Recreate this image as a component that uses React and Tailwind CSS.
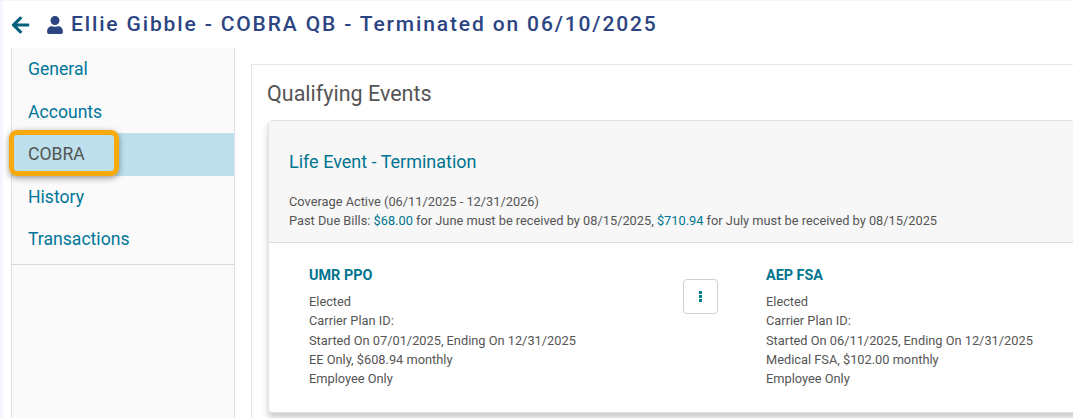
import React from "react";
import { FaArrowLeft, FaUser } from "react-icons/fa";

const NAV = ["General", "Accounts", "COBRA", "History", "Transactions"];

const PLANS = [
  {
    name: "UMR PPO",
    lines: [
      "Elected",
      "Carrier Plan ID:",
      "Started On 07/01/2025, Ending On 12/31/2025",
      "EE Only, $608.94 monthly",
      "Employee Only",
    ],
  },
  {
    name: "AEP FSA",
    lines: [
      "Elected",
      "Carrier Plan ID:",
      "Started On 06/11/2025, Ending On 12/31/2025",
      "Medical FSA, $102.00 monthly",
      "Employee Only",
    ],
  },
];

function Plan({ plan }) {
  return (
    <div className="w-[374px] shrink-0">
      <div className="text-[14.4px] leading-[20px] font-bold text-[#00758f]">{plan.name}</div>
      <div className="mt-[6px] text-[12.8px] leading-[19.3px] text-[#555]">
        {plan.lines.map((line) => (
          <div key={line}>{line}</div>
        ))}
      </div>
    </div>
  );
}

export default function App() {
  return (
    <div className="relative flex h-[418px] w-[1073px] flex-col overflow-hidden border-t border-l-[3px] border-[#f4f6fc] bg-white font-['Roboto',sans-serif]">
      {/* Page title */}
      <div className="flex h-[47px] shrink-0 items-center pt-[1px] pl-[8px]">
        <FaArrowLeft className="h-[20px] w-[19px] text-[#00607a]" />
        <FaUser className="ml-[17px] h-[18px] w-[16px] text-[#2c4582]" />
        <h1 className="ml-[8px] text-[21px] font-medium tracking-[1.86px] whitespace-nowrap text-[#2c4582]">
          Ellie Gibble - COBRA QB - Terminated on 06/10/2025
        </h1>
      </div>

      <div className="flex min-h-0 flex-1">
        {/* Sidebar */}
        <div className="ml-[8px] w-[224px] shrink-0 border-x border-[#e0e0e0] bg-[#fafafa]">
          <div className="border-b border-[#d8d8d8] pb-[3.2px]">
            {NAV.map((item) => (
              <div
                key={item}
                className={
                  item === "COBRA"
                    ? "flex h-[42.8px] items-center bg-[#bde0ec] pl-[16px] text-[17.6px] text-[#555]"
                    : "flex h-[42.5px] items-center pl-[16px] text-[17.6px] text-[#00769a]"
                }
              >
                {item}
              </div>
            ))}
          </div>
        </div>

        {/* Main panel */}
        <div className="mt-[16px] ml-[16px] min-w-0 flex-1 border-t border-l border-[#e6e6e6] pl-[16px]">
          <h2 className="-ml-[1px] pt-[15px] text-[21.5px] leading-[28px] text-[#555]">Qualifying Events</h2>

          <div className="mt-[12px] w-[900px] rounded-[4px] border border-[#e2e2e2] bg-white shadow-[0_5px_6px_rgba(0,0,0,0.2)]">
            <div className="h-[122px] border-b border-[#dcdcdc] bg-[#f7f7f7] pt-[29px] pl-[20px]">
              <div className="text-[18px] leading-[24px] text-[#00758f]">Life Event - Termination</div>
              <div className="mt-[18px] text-[12.8px] leading-[19px] text-[#555]">
                <div>Coverage Active (06/11/2025 - 12/31/2026)</div>
                <div>
                  Past Due Bills: <span className="text-[#00758f]">$68.00</span> for June must be received by
                  08/15/2025, <span className="text-[#00758f]">$710.94</span> for July must be received by 08/15/2025
                </div>
              </div>
            </div>

            <div className="flex h-[169px] pt-[23px] pl-[40px]">
              <Plan plan={PLANS[0]} />
              <button className="mt-[13px] flex h-[35px] w-[35px] shrink-0 items-center justify-center rounded-[4px] border border-[#cfcfcf] bg-white">
                <span className="flex flex-col gap-[1px]">
                  <span className="h-[3px] w-[3px] bg-[#00808a]" />
                  <span className="h-[3px] w-[3px] bg-[#00808a]" />
                  <span className="h-[3px] w-[3px] bg-[#00808a]" />
                </span>
              </button>
              <div className="ml-[48px]">
                <Plan plan={PLANS[1]} />
              </div>
            </div>
          </div>
        </div>
      </div>

      {/* Callout over the COBRA item */}
      <div className="absolute top-[129px] left-[6px] h-[46px] w-[110px] rounded-[8px] border-[5px] border-[#f8a90c] shadow-[0_2px_6px_rgba(0,0,0,0.4)]" />
    </div>
  );
}
